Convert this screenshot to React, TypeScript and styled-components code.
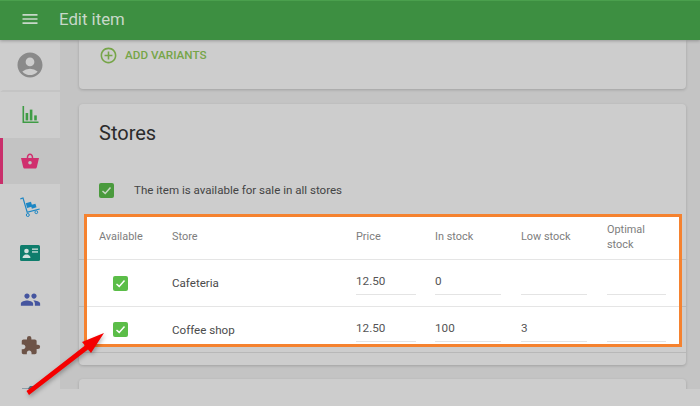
import styled, { createGlobalStyle } from "styled-components";
import {
  MdAccountCircle,
  MdAddCircleOutline,
  MdExtension,
  MdMenu,
  MdPeople,
} from "react-icons/md";

const GlobalStyle = createGlobalStyle`
  html, body {
    margin: 0;
    padding: 0;
    background: #cdcdcd;
  }
  *, *::before, *::after {
    box-sizing: border-box;
  }
`;

const Page = styled.div`
  position: relative;
  width: 700px;
  height: 406px;
  display: flex;
  flex-direction: column;
  overflow: hidden;
  background: #cdcdcd;
  font-family: Roboto, "Liberation Sans", sans-serif;
`;

const Header = styled.header`
  position: relative;
  z-index: 2;
  flex: 0 0 40px;
  display: flex;
  align-items: center;
  gap: 19px;
  padding: 0 0 3px 20px;
  background: #3d8f41;
  border-top: 1px solid #4aa04d;
  box-shadow: 0 1px 3px rgba(0, 0, 0, 0.25);
  color: #c8d8c9;
`;

const HeaderTitle = styled.h1`
  margin: 0;
  font-size: 16.8px;
  font-weight: 400;
  line-height: 24px;
`;

const Body = styled.div`
  flex: 0 0 349px;
  display: flex;
  overflow: hidden;
`;

const Sidebar = styled.nav`
  flex: 0 0 60px;
  display: flex;
  flex-direction: column;
  background: #cdcdcd;
`;

const NavItem = styled.div<{ $active?: boolean; $height?: number; $color: string; $divider?: boolean }>`
  flex: 0 0 ${(p) => p.$height ?? 46}px;
  display: flex;
  align-items: center;
  justify-content: center;
  color: ${(p) => p.$color};
  background: ${(p) => (p.$active ? "#c3c3c3" : "transparent")};
  border-left: 3px solid ${(p) => (p.$active ? "#c92f6b" : "transparent")};
  border-bottom: ${(p) => (p.$divider ? "2px solid #c4c4c4" : "0")};
  padding-right: 3px;
`;

const Main = styled.main`
  flex: 1;
  display: flex;
  flex-direction: column;
  gap: 14px;
  padding: 0 14px 0 19px;
  background: #c4c4c4;
`;

const Card = styled.section`
  flex: none;
  background: #cdcdcd;
  border-radius: 4px;
  box-shadow: 0 1px 3px rgba(0, 0, 0, 0.18);
`;

const VariantsCard = styled(Card)`
  height: 49px;
  margin-bottom: 1px;
  padding: 3px 0 0 20px;
  border-radius: 0 0 4px 4px;
`;

const AddButton = styled.div`
  display: flex;
  align-items: center;
  gap: 7px;
  height: 24px;
  color: #76a548;
  font-size: 11.7px;
  font-weight: 500;
`;

const StoresCard = styled(Card)`
  height: 261px;
  padding-top: 17px;
`;

const LastCard = styled(Card)`
  height: 40px;
`;

const CardTitle = styled.h2`
  margin: 0 0 33px 20px;
  color: #2b2b2b;
  font-size: 20px;
  font-weight: 400;
  line-height: 24px;
`;

const AllStores = styled.div`
  display: flex;
  align-items: center;
  gap: 20px;
  height: 24px;
  margin: 0 0 12px 20px;
  color: #444;
  font-size: 11.55px;
`;

const Box = styled.span<{ $dim?: boolean }>`
  flex: none;
  width: 15px;
  height: 15px;
  display: flex;
  align-items: center;
  justify-content: center;
  border-radius: 2px;
  background: ${(p) => (p.$dim ? "#4a9a3d" : "#5bbd48")};
  color: ${(p) => (p.$dim ? "#c8d8c4" : "#fff")};
`;

const Table = styled.div`
  position: relative;

  &::before,
  &::after {
    content: "";
    position: absolute;
    top: 0;
    left: 5px;
    right: 4px;
    height: 133px;
  }

  &::before {
    background: #fff;
  }

  &::after {
    z-index: 2;
    border: 3px solid #f5822f;
    pointer-events: none;
  }
`;

const Row = styled.div<{ $height: number }>`
  position: relative;
  z-index: 1;
  display: grid;
  grid-template-columns: 73px 184px 79px 86px 86px 79px;
  align-items: center;
  height: ${(p) => p.$height}px;
  padding-left: 20px;
  border-bottom: 1px solid rgba(0, 0, 0, 0.1);
`;

const HeadCell = styled.div`
  color: #7d7d7d;
  font-size: 10.9px;
  line-height: 15px;
`;

const CheckCell = styled.div`
  display: flex;
  padding-left: 14px;
`;

const StoreName = styled.div`
  color: #4b4b4b;
  font-size: 11.6px;
`;

const Field = styled.div<{ $width: number }>`
  width: ${(p) => p.$width}px;
  height: 28px;
  margin-top: -4px;
  padding-top: 6px;
  border-bottom: 1px solid #e4e4e4;
  color: #555;
  font-size: 11.7px;
  line-height: 16px;
`;

const Footer = styled.div`
  flex: 1;
  background: #cdcdcd;
  position: relative;
  z-index: 1;
`;

const Arrow = styled.svg`
  position: absolute;
  left: 0;
  top: 320px;
  z-index: 3;
  filter: drop-shadow(1px 2px 2px rgba(0, 0, 0, 0.3));
`;

const Check = () => (
  <svg width="11" height="11" viewBox="0 0 11 11">
    <path d="M1.5 6 L4.2 8.4 L9.5 2.6" fill="none" stroke="currentColor" strokeWidth="1.5" />
  </svg>
);

const ChartIcon = () => (
  <svg width="17" height="18" viewBox="0 0 17 18" fill="currentColor">
    <path d="M0.5 0h1.6v15.4h14.4v1.6H0.5z" />
    <rect x="3.6" y="7" width="2.6" height="7.4" />
    <rect x="7.8" y="3.6" width="2.6" height="10.8" />
    <rect x="12.2" y="9.4" width="2.6" height="5" />
  </svg>
);

const BasketIcon = () => (
  <svg width="18" height="16" viewBox="0 0 18 16" fill="currentColor">
    <path d="M9 0.6c-1.9 0-3.3 1.5-3.3 4.6h1.5C7.2 3 7.9 2 9 2s1.8 1 1.8 3.2h1.5C12.3 2.1 10.9 0.6 9 0.6z" />
    <path d="M0 5h18l-2.2 9.3c-0.2 0.8-0.8 1.2-1.5 1.2H3.7c-0.7 0-1.3-0.4-1.5-1.2zM9 8a1.8 1.8 0 1 0 0 3.6A1.8 1.8 0 0 0 9 8z" fillRule="evenodd" />
  </svg>
);

const TrolleyIcon = () => (
  <svg width="20" height="20" viewBox="0 0 20 20" fill="currentColor">
    <path d="M0.2 1.2 L3.4 0.2 L7.6 14.6 L19.5 11.6 L19.8 12.6 L6.8 16 L2.6 1.8 L0.5 2.4z" />
    <rect x="6.4" y="5.4" width="5.4" height="5" transform="rotate(-16 9 8)" />
    <rect x="11.2" y="7.2" width="4.8" height="3.8" transform="rotate(-16 14 9)" />
    <circle cx="7.8" cy="18" r="1.5" fill="none" stroke="currentColor" strokeWidth="1" />
    <circle cx="16.3" cy="15.2" r="1.4" fill="none" stroke="currentColor" strokeWidth="1" />
  </svg>
);

const ContactIcon = () => (
  <svg width="20" height="16" viewBox="0 0 20 16">
    <rect width="20" height="16" rx="1.5" fill="currentColor" />
    <circle cx="6.5" cy="6" r="2.3" fill="#d3e2de" />
    <path d="M2.5 13c0-2.2 2-3.4 4-3.4s4 1.2 4 3.4z" fill="#d3e2de" />
    <rect x="12" y="3.5" width="6" height="1.3" fill="#d3e2de" />
    <rect x="12" y="6.3" width="6" height="1.3" fill="#d3e2de" />
  </svg>
);

const PartialIcon = () => (
  <svg width="20" height="18" viewBox="0 0 20 18" fill="currentColor">
    <path d="M2 6.5h6l2-2.5h5v6H2z" />
  </svg>
);

const stores = [
  { name: "Cafeteria", price: "12.50", inStock: "0", low: "", height: 47 },
  { name: "Coffee shop", price: "12.50", inStock: "100", low: "3", height: 46 },
];

export default function App() {
  return (
    <Page>
      <GlobalStyle />
      <Header>
        <MdMenu size={20} />
        <HeaderTitle>Edit item</HeaderTitle>
      </Header>
      <Body>
        <Sidebar>
          <NavItem $height={52} $color="#8a8a8a" $divider>
            <MdAccountCircle size={30} />
          </NavItem>
          <NavItem $color="#3f9c45">
            <ChartIcon />
          </NavItem>
          <NavItem $active $color="#d02f6e">
            <BasketIcon />
          </NavItem>
          <NavItem $color="#1c86c4">
            <TrolleyIcon />
          </NavItem>
          <NavItem $color="#0f7d6c">
            <ContactIcon />
          </NavItem>
          <NavItem $color="#45559f">
            <MdPeople size={21} />
          </NavItem>
          <NavItem $color="#6d5347">
            <MdExtension size={21} />
          </NavItem>
          <NavItem $color="#4f6f80">
            <PartialIcon />
          </NavItem>
        </Sidebar>
        <Main>
          <VariantsCard>
            <AddButton>
              <MdAddCircleOutline size={19} />
              ADD VARIANTS
            </AddButton>
          </VariantsCard>
          <StoresCard>
            <CardTitle>Stores</CardTitle>
            <AllStores>
              <Box $dim>
                <Check />
              </Box>
              The item is available for sale in all stores
            </AllStores>
            <Table>
              <Row $height={46}>
                <HeadCell>Available</HeadCell>
                <HeadCell>Store</HeadCell>
                <HeadCell>Price</HeadCell>
                <HeadCell>In stock</HeadCell>
                <HeadCell>Low stock</HeadCell>
                <HeadCell>
                  Optimal
                  <br />
                  stock
                </HeadCell>
              </Row>
              {stores.map((store) => (
                <Row $height={store.height} key={store.name}>
                  <CheckCell>
                    <Box>
                      <Check />
                    </Box>
                  </CheckCell>
                  <StoreName>{store.name}</StoreName>
                  <Field $width={60}>{store.price}</Field>
                  <Field $width={66}>{store.inStock}</Field>
                  <Field $width={66}>{store.low}</Field>
                  <Field $width={59} />
                </Row>
              ))}
            </Table>
          </StoresCard>
          <LastCard />
        </Main>
      </Body>
      <Footer />
      <Arrow width="110" height="80" viewBox="0 320 110 80">
        <path d="M26.500 391 L29 395 L88 349.500 L91 353 L104 333 L82 342 L85 345.500z" fill="#f50000" />
      </Arrow>
    </Page>
  );
}
